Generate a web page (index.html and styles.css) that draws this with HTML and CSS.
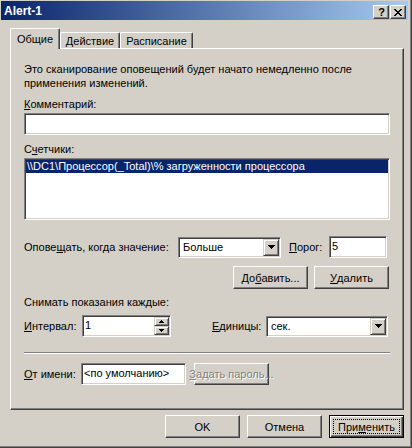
FILE: index.html
```html
<!DOCTYPE html>
<html lang="ru">
<head>
<meta charset="utf-8">
<title>Alert-1</title>
<link rel="stylesheet" href="styles.css">
</head>
<body>
<div class="window">
  <div class="titlebar">
    <span class="title">Alert-1</span>
    <div class="caption-buttons">
      <span class="cbtn help">?</span>
      <span class="cbtn close"><svg width="8" height="7" viewBox="0 0 8 7" shape-rendering="crispEdges"><path d="M0 0h2v1H0zM6 0h2v1H6zM1 1h2v1H1zM5 1h2v1H5zM2 2h4v1H2zM3 3h2v1H3zM2 4h4v1H2zM1 5h2v1H1zM5 5h2v1H5zM0 6h2v1H0zM6 6h2v1H6z" fill="#000"/></svg></span>
    </div>
  </div>

  <div class="tabs">
    <div class="tab active t1">Общие</div>
    <div class="tab t2">Действие</div>
    <div class="tab t3">Расписание</div>
  </div>

  <div class="panel">
    <p class="desc">Это сканирование оповещений будет начато немедленно после<br>применения изменений.</p>
    <div class="lbl l-comment"><u>К</u>омментарий:</div>
    <div class="edit comment"></div>
    <div class="lbl l-counters">С<u>ч</u>етчики:</div>
    <div class="listbox">
      <div class="item sel">\\DC1\Процессор(_Total)\% загруженности процессора</div>
    </div>

    <div class="row r-alert">
      <span class="lbl w-alert">Опове<u>щ</u>ать, когда значение:</span>
      <div class="combo w-cond">
        <span class="combo-text">Больше</span>
        <span class="drop"><svg width="7" height="4" viewBox="0 0 7 4" shape-rendering="crispEdges"><path d="M0 0h7v1H0zM1 1h5v1H1zM2 2h3v1H2zM3 3h1v1H3z" fill="#000"/></svg></span>
      </div>
      <span class="lbl w-thr"><u>П</u>орог:</span>
      <div class="edit thr"><span class="val">5</span></div>
    </div>

    <div class="row r-buttons">
      <div class="btn">До<u>б</u>авить...</div>
      <div class="btn"><u>У</u>далить</div>
    </div>

    <div class="lbl l-sample">Снимать показания каждые:</div>

    <div class="row r-interval">
      <span class="lbl w-int"><u>И</u>нтервал:</span>
      <div class="edit spin-edit">
        <span class="val">1</span>
        <div class="spin">
          <span class="sbtn"><svg width="5" height="3" viewBox="0 0 5 3" shape-rendering="crispEdges"><path d="M2 0h1v1H2zM1 1h3v1H1zM0 2h5v1H0z" fill="#000"/></svg></span>
          <span class="sbtn"><svg width="5" height="3" viewBox="0 0 5 3" shape-rendering="crispEdges"><path d="M0 0h5v1H0zM1 1h3v1H1zM2 2h1v1H2z" fill="#000"/></svg></span>
        </div>
      </div>
      <span class="lbl w-units"><u>Е</u>диницы:</span>
      <div class="combo w-units-combo">
        <span class="combo-text">сек.</span>
        <span class="drop"><svg width="7" height="4" viewBox="0 0 7 4" shape-rendering="crispEdges"><path d="M0 0h7v1H0zM1 1h5v1H1zM2 2h3v1H2zM3 3h1v1H3z" fill="#000"/></svg></span>
      </div>
    </div>

    <div class="sep"></div>

    <div class="row r-from">
      <span class="lbl w-from"><u>О</u>т имени:</span>
      <div class="edit from"><span class="val">&lt;по умолчанию&gt;</span></div>
      <div class="btn disabled w-pass"><u>З</u>адать пароль...</div>
    </div>
  </div>

  <div class="footer">
    <div class="btn">OK</div>
    <div class="btn">Отмена</div>
    <div class="btn default"><span class="focus">При<u>м</u>енить</span></div>
  </div>
</div>
</body>
</html>
```

FILE: styles.css
```css
html, body {
  margin: 0;
  padding: 0;
  background: #D4D0C8;
}

body {
  font-family: "Liberation Sans", Arial, sans-serif;
  font-size: 11px;
  color: #000;
}

u {
  text-decoration: underline;
  text-underline-offset: 1px;
}

.window {
  width: 412px;
  height: 448px;
  box-sizing: border-box;
  padding: 1px 4px 0 1px;
  background: #D4D0C8;
  box-shadow: inset -1px -1px #404040, inset -2px -2px #808080;
  display: flex;
  flex-direction: column;
}

/* Title bar */
.titlebar {
  height: 19px;
  display: flex;
  align-items: flex-start;
  padding: 0 2px 0 3px;
  background: linear-gradient(to right, #0A246A, #A6CAF0);
}

.title {
  flex: 1;
  color: #fff;
  font-weight: bold;
  font-size: 12px;
  line-height: 20px;
}

.caption-buttons {
  display: flex;
  gap: 1px;
  margin-top: 4px;
}

.cbtn {
  width: 16px;
  height: 14px;
  box-sizing: border-box;
  background: #D4D0C8;
  border: 1px solid;
  border-color: #fff #404040 #404040 #fff;
  box-shadow: inset -1px -1px #808080;
  display: flex;
  align-items: center;
  justify-content: center;
  font-weight: bold;
  font-size: 11px;
  line-height: 11px;
  color: #000;
}

.cbtn.help {
  padding-left: 1px;
}

/* Tabs */
.tabs {
  display: flex;
  align-items: flex-end;
  height: 20px;
  margin: 8px 0 0 9px;
}

.tab {
  box-sizing: border-box;
  height: 16px;
  padding-top: 1px;
  line-height: 14px;
  text-align: center;
  background: #D4D0C8;
  border-top: 1px solid #fff;
  border-left: 1px solid #fff;
  border-right: 1px solid #404040;
  box-shadow: inset -1px 0 #808080;
  border-radius: 2px 2px 0 0;
}

.tab.active {
  position: relative;
  z-index: 1;
  height: 21px;
  margin-bottom: -1px;
  padding-top: 3px;
}

.t1 { width: 50px; }
.t2 { width: 60px; }
.t3 { width: 73px; }

/* Panel */
.panel {
  margin-left: 9px;
  width: 394px;
  height: 362px;
  box-sizing: border-box;
  border: 1px solid;
  border-color: #fff #404040 #404040 #fff;
  box-shadow: inset -1px -1px #808080;
  padding: 13px 13px 0 13px;
  display: flex;
  flex-direction: column;
}

.desc {
  margin: 0;
  line-height: 14px;
}

.lbl {
  line-height: 14px;
  white-space: nowrap;
}

.l-comment { margin-top: 7px; }
.l-counters { margin-top: 7px; }
.l-sample { margin-top: 6px; }

.edit {
  box-sizing: border-box;
  background: #fff;
  border: 1px solid;
  border-color: #808080 #fff #fff #808080;
  box-shadow: inset 1px 1px #404040, inset -1px -1px #D4D0C8;
  display: flex;
  align-items: center;
  padding: 0 0 2px 2px;
  height: 22px;
}

.comment {
  margin-top: 2px;
}

.listbox {
  margin-top: 2px;
  height: 62px;
  box-sizing: border-box;
  background: #fff;
  border: 1px solid;
  border-color: #808080 #fff #fff #808080;
  box-shadow: inset 1px 1px #404040, inset -1px -1px #D4D0C8;
  padding: 1px;
}

.item {
  height: 13px;
  line-height: 13px;
  padding-left: 1px;
  white-space: nowrap;
}

.item.sel {
  background: #0A246A;
  color: #fff;
}

.row {
  display: flex;
  align-items: center;
  height: 22px;
}

.r-alert { margin-top: 16px; }
.r-buttons {
  margin-top: 8px;
  height: 23px;
  justify-content: flex-end;
  gap: 6px;
  padding-right: 1px;
}
.r-interval { margin-top: 6px; }
.r-from { margin-top: 9px; }

.w-alert { width: 154px; }
.w-cond { width: 103px; }
.w-thr { width: 40px; margin-left: 8px; }
.thr { width: 58px; }

.w-int { width: 58px; }
.spin-edit { width: 89px; padding-right: 1px; }
.w-units { width: 54px; margin-left: 41px; }
.w-units-combo { width: 122px; }

.w-from { width: 57px; }
.from { width: 105px; }
.w-pass { width: 100px; margin-left: 8px; }

.val {
  flex: 1;
  white-space: nowrap;
}

/* Combo box */
.combo {
  box-sizing: border-box;
  height: 21px;
  background: #fff;
  border: 1px solid;
  border-color: #808080 #fff #fff #808080;
  box-shadow: inset 1px 1px #404040, inset -1px -1px #D4D0C8;
  display: flex;
  align-items: stretch;
  padding: 1px;
}

.combo-text {
  flex: 1;
  padding-left: 3px;
  line-height: 16px;
  white-space: nowrap;
}

.drop {
  width: 16px;
  box-sizing: border-box;
  background: #D4D0C8;
  border: 1px solid;
  border-color: #D4D0C8 #404040 #404040 #D4D0C8;
  box-shadow: inset 1px 1px #fff, inset -1px -1px #808080;
  display: flex;
  align-items: center;
  justify-content: center;
}

/* Spinner */
.spin {
  width: 15px;
  align-self: stretch;
  margin: 1px 0 -1px 0;
  display: flex;
  flex-direction: column;
}

.sbtn {
  flex: 1;
  box-sizing: border-box;
  background: #D4D0C8;
  border: 1px solid;
  border-color: #D4D0C8 #404040 #404040 #D4D0C8;
  box-shadow: inset 1px 1px #fff, inset -1px -1px #808080;
  display: flex;
  align-items: center;
  justify-content: center;
}

/* Separator */
.sep {
  margin-top: 15px;
  border-top: 1px solid #808080;
  border-bottom: 1px solid #fff;
}

/* Buttons */
.btn {
  box-sizing: border-box;
  width: 75px;
  height: 23px;
  background: #D4D0C8;
  border: 1px solid;
  border-color: #fff #404040 #404040 #fff;
  box-shadow: inset -1px -1px #808080;
  display: flex;
  align-items: center;
  justify-content: center;
  white-space: nowrap;
}

.r-from .btn {
  height: 22px;
}

.btn.disabled {
  color: #808080;
  text-shadow: 1px 1px #fff;
}

.btn.default {
  border-color: #000;
  box-shadow: inset 1px 1px #fff, inset -1px -1px #404040, inset -2px -2px #808080;
  position: relative;
}

.btn.default::after {
  content: "";
  position: absolute;
  left: 3px;
  top: 3px;
  right: 3px;
  bottom: 3px;
  border: 1px dotted #000;
}

/* Footer */
.footer {
  margin: 5px 0 0 9px;
  width: 394px;
  display: flex;
  justify-content: flex-end;
  gap: 7px;
}
```
